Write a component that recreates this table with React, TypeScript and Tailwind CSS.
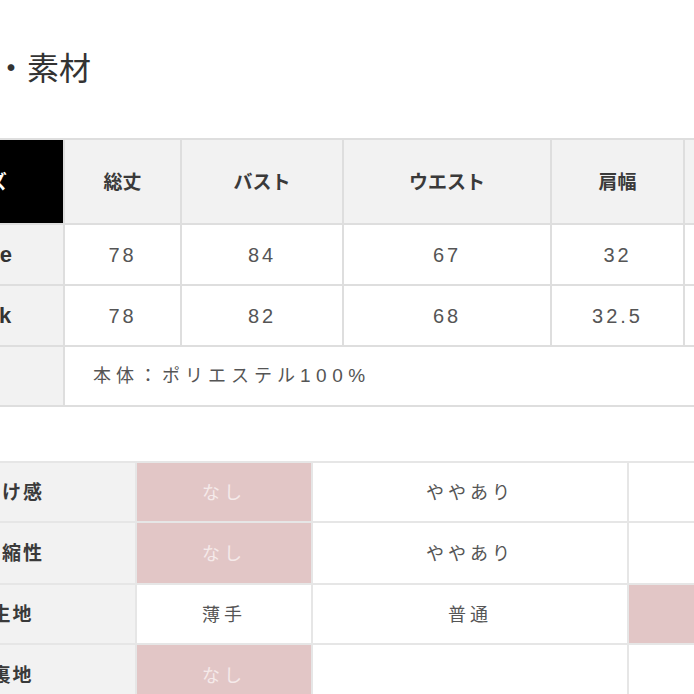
import React from 'react';

const sizeHeaders = ['総丈', 'バスト', 'ウエスト', '肩幅', '袖丈'];

const sizeRows = [
  { color: 'White', values: ['78', '84', '67', '32', '58'] },
  { color: 'Black', values: ['78', '82', '68', '32.5', '58'] },
];

type Level = { label: string; cells: { text: string; on: boolean }[] };

const fabricRows: Level[] = [
  { label: '透け感', cells: [{ text: 'なし', on: true }, { text: 'ややあり', on: false }, { text: 'あり', on: false }] },
  { label: '伸縮性', cells: [{ text: 'なし', on: true }, { text: 'ややあり', on: false }, { text: 'あり', on: false }] },
  { label: '生地', cells: [{ text: '薄手', on: false }, { text: '普通', on: false }, { text: '厚手', on: true }] },
  { label: '裏地', cells: [{ text: 'なし', on: true }, { text: '', on: false }, { text: 'あり', on: false }] },
];

const App: React.FC = () => {
  return (
    <div className="relative h-[694px] w-[694px] overflow-hidden bg-white font-['Liberation_Sans','Noto_Sans_CJK_JP',sans-serif]">
      <div className="ml-[-104px] flex h-[692px] w-[900px] flex-col">
        {/* Title */}
        <h2 className="mt-[53px] pl-[4px] text-[32px] leading-[32px] font-normal text-[#333]">サイズ・素材</h2>

        {/* Size table */}
        <div className="ml-[12px] mt-[53px] grid grid-cols-[153px_115px_160px_206px_131px_200px] grid-rows-[83px_59px_59px_58px] gap-[2px] bg-[#dedede] p-[2px]">
          <div className="flex items-center justify-center bg-black pt-[4px] pr-[16px] text-[19px] font-bold text-white">サイズ</div>
          {sizeHeaders.map(h => (
            <div key={h} className="flex items-center justify-center bg-[#f2f2f2] pt-[4px] text-[19px] font-bold text-[#3a3a3a]">
              {h}
            </div>
          ))}

          {sizeRows.map(row => (
            <React.Fragment key={row.color}>
              <div className="flex items-center justify-center bg-[#f2f2f2] pr-[9px] text-[22px] font-bold text-[#333]">{row.color}</div>
              {row.values.map((v, i) => (
                <div key={i} className="flex items-center justify-center bg-white text-[20px] tracking-[3px] text-[#555]">
                  {v}
                </div>
              ))}
            </React.Fragment>
          ))}

          <div className="bg-[#f2f2f2]" />
          <div className="col-span-5 flex items-center bg-white pl-[28px] text-[18px] text-[#555]">
            <span className="tracking-[5px]">本体：ポリエステル</span>
            <span className="text-[19px] tracking-[5.5px]">100%</span>
          </div>
        </div>

        {/* Fabric table */}
        <div className="mt-[54px] grid grid-cols-[237px_174px_314px_200px] grid-rows-[58px_60px_58px_60px] gap-[2px] bg-[#e6e6e6] p-[2px]">
          {fabricRows.map(row => (
            <React.Fragment key={row.label}>
              <div className="flex items-center justify-center bg-[#f2f2f2] pt-[2px] pr-[8px] text-[19px] font-bold tracking-[2px] text-[#3a3a3a]">
                {row.label}
              </div>
              {row.cells.map((c, i) => (
                <div
                  key={i}
                  className={
                    c.on
                      ? 'flex items-center justify-center bg-[#e2c6c6] pt-[2px] text-[18px] tracking-[4px] text-[#f5eaea]'
                      : 'flex items-center justify-center bg-white pt-[2px] text-[18px] tracking-[4px] text-[#555]'
                  }
                >
                  {c.text}
                </div>
              ))}
            </React.Fragment>
          ))}
        </div>
      </div>
      <div className="h-[2px] w-full bg-[#2a2a2a]" />
    </div>
  );
};

export default App;
